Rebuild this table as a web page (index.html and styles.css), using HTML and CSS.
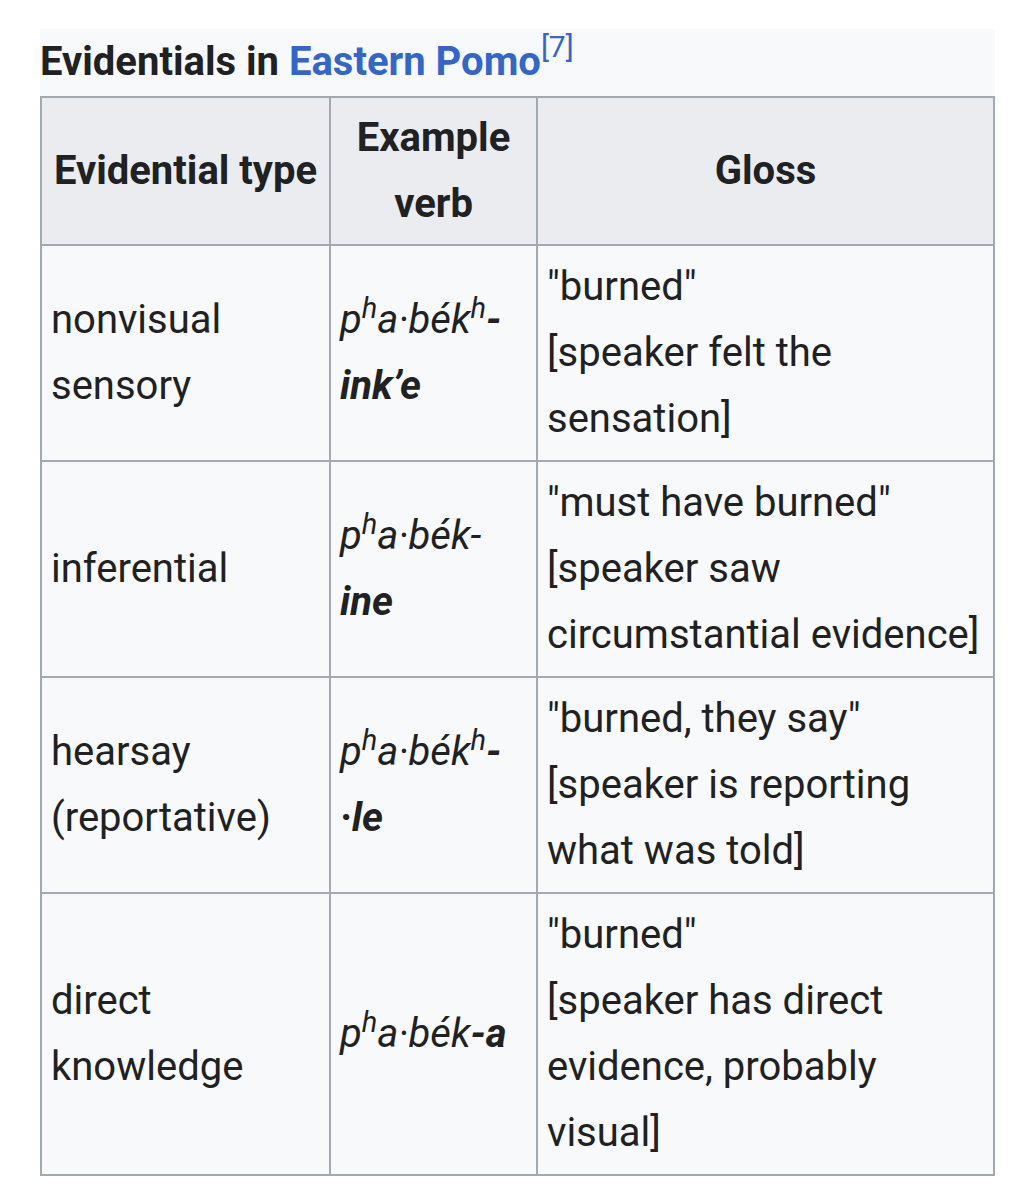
FILE: index.html
```html
<!DOCTYPE html>
<html lang="en">
<head>
<meta charset="utf-8">
<title>Evidentials in Eastern Pomo</title>
<link rel="stylesheet" href="styles.css">
</head>
<body>
<div class="page">
<table class="wikitable">
<caption>Evidentials in <a href="#">Eastern Pomo</a><sup class="ref">[7]</sup></caption>
<colgroup><col class="c1"><col class="c2"><col class="c3"></colgroup>
<thead>
<tr><th>Evidential type</th><th>Example verb</th><th>Gloss</th></tr>
</thead>
<tbody>
<tr>
<td>nonvisual sensory</td>
<td><i>p<sup class="asp">h</sup>a·bék<sup class="asp">h</sup><b>-ink’e</b></i></td>
<td>"burned"<br>[speaker felt the sensation]</td>
</tr>
<tr>
<td>inferential</td>
<td><i>p<sup class="asp">h</sup>a·bék-<b>ine</b></i></td>
<td>"must have burned"<br>[speaker saw circumstantial evidence]</td>
</tr>
<tr>
<td>hearsay (reportative)</td>
<td><i>p<sup class="asp">h</sup>a·bék<sup class="asp">h</sup><b>-·le</b></i></td>
<td>"burned, they say"<br>[speaker is reporting what was told]</td>
</tr>
<tr>
<td>direct knowledge</td>
<td><i>p<sup class="asp">h</sup>a·bék<b>-a</b></i></td>
<td>"burned"<br>[speaker has direct evidence, probably visual]</td>
</tr>
</tbody>
</table>
</div>
</body>
</html>
```
FILE: styles.css
```css
html, body {
  margin: 0;
  padding: 0;
  background: #ffffff;
}
.page {
  padding: 29px 41px 20px 40px;
  font-family: Roboto, "Liberation Sans", sans-serif;
  color: #202122;
  font-size: 40px;
  line-height: 66px;
}
.wikitable {
  width: 953px;
  border-collapse: collapse;
  table-layout: fixed;
  background: #f8f9fa;
  border: 2px solid #a2a9b1;
}
.wikitable caption {
  background: #f8f9fa;
  text-align: left;
  font-weight: bold;
  padding: 0;
  height: 67px;
  line-height: 66px;
}
.wikitable caption a {
  color: #3366cc;
  text-decoration: none;
}
.ref {
  font-weight: normal;
  color: #3366cc;
  font-size: 30px;
  line-height: 1;
  vertical-align: 18px;
}
.c1 { width: 289px; }
.c2 { width: 207px; }
.c3 { width: 457px; }
.wikitable th,
.wikitable td {
  border: 2px solid #a2a9b1;
  padding: 8px 9px 8px 9px;
  vertical-align: middle;
}
.wikitable th {
  background: #eaecf0;
  text-align: center;
  font-weight: bold;
  padding-top: 7px;
  padding-bottom: 7px;
}
.wikitable td {
  text-align: left;
}
.asp {
  font-size: 29px;
  line-height: 1;
  vertical-align: 15px;
}
```
